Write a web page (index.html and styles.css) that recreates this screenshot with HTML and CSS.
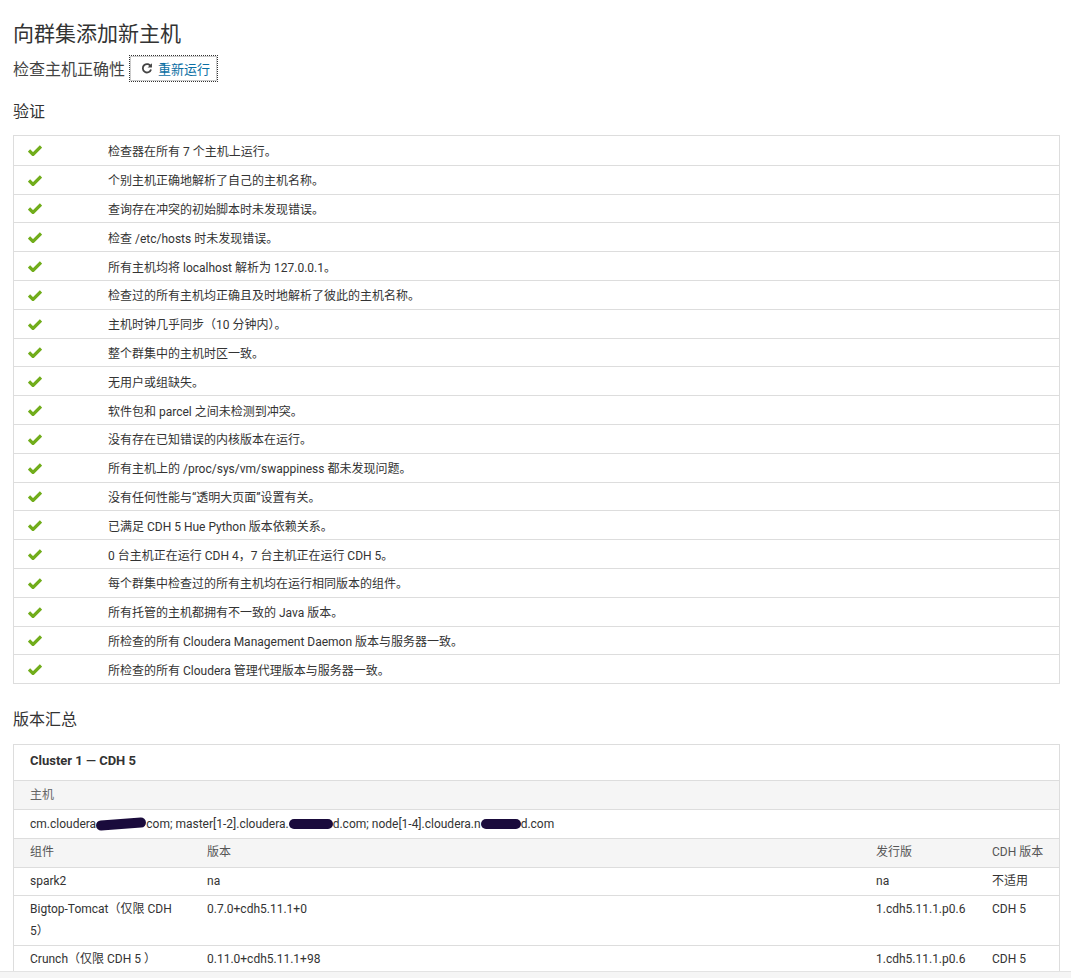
FILE: index.html
```html
<!DOCTYPE html>
<html lang="zh-CN">
<head>
<meta charset="utf-8">
<title>向群集添加新主机</title>
<link rel="stylesheet" href="styles.css">
</head>
<body>
<div class="page">
  <h1 class="title">向群集添加新主机</h1>
  <div class="subhead">
    <span>检查主机正确性</span>
    <button class="rerun" type="button">
      <svg class="refresh" viewBox="0 0 16 16" width="12" height="12"><path d="M13.2 6.2A5.6 5.6 0 1 0 13.4 10" fill="none" stroke="#444" stroke-width="2.4"/><path d="M14.6 1.6V7.4H8.8Z" fill="#444"/></svg>
      <span>重新运行</span>
    </button>
  </div>
  <h2 class="section">验证</h2>
  <div class="checks">
    <div class="check"><span class="ok"></span><span class="msg">检查器在所有 7 个主机上运行。</span></div>
    <div class="check"><span class="ok"></span><span class="msg">个别主机正确地解析了自己的主机名称。</span></div>
    <div class="check"><span class="ok"></span><span class="msg">查询存在冲突的初始脚本时未发现错误。</span></div>
    <div class="check"><span class="ok"></span><span class="msg">检查 /etc/hosts 时未发现错误。</span></div>
    <div class="check"><span class="ok"></span><span class="msg">所有主机均将 localhost 解析为 127.0.0.1。</span></div>
    <div class="check"><span class="ok"></span><span class="msg">检查过的所有主机均正确且及时地解析了彼此的主机名称。</span></div>
    <div class="check"><span class="ok"></span><span class="msg">主机时钟几乎同步（10 分钟内）。</span></div>
    <div class="check"><span class="ok"></span><span class="msg">整个群集中的主机时区一致。</span></div>
    <div class="check"><span class="ok"></span><span class="msg">无用户或组缺失。</span></div>
    <div class="check"><span class="ok"></span><span class="msg">软件包和 parcel 之间未检测到冲突。</span></div>
    <div class="check"><span class="ok"></span><span class="msg">没有存在已知错误的内核版本在运行。</span></div>
    <div class="check"><span class="ok"></span><span class="msg">所有主机上的 /proc/sys/vm/swappiness 都未发现问题。</span></div>
    <div class="check"><span class="ok"></span><span class="msg">没有任何性能与“透明大页面”设置有关。</span></div>
    <div class="check"><span class="ok"></span><span class="msg">已满足 CDH 5 Hue Python 版本依赖关系。</span></div>
    <div class="check"><span class="ok"></span><span class="msg">0 台主机正在运行 CDH 4，7 台主机正在运行 CDH 5。</span></div>
    <div class="check"><span class="ok"></span><span class="msg">每个群集中检查过的所有主机均在运行相同版本的组件。</span></div>
    <div class="check"><span class="ok"></span><span class="msg">所有托管的主机都拥有不一致的 Java 版本。</span></div>
    <div class="check"><span class="ok"></span><span class="msg">所检查的所有 Cloudera Management Daemon 版本与服务器一致。</span></div>
    <div class="check"><span class="ok"></span><span class="msg">所检查的所有 Cloudera 管理代理版本与服务器一致。</span></div>
  </div>
  <h2 class="section section-2">版本汇总</h2>
  <div class="summary">
    <div class="cluster">Cluster 1 — CDH 5</div>
    <div class="label-row">主机</div>
    <div class="hosts">cm.cloudera.<span class="redact r1"></span>com; master[1-2].cloudera.<span class="redact r2"></span>d.com; node[1-4].cloudera.n<span class="redact r3"></span>d.com</div>
    <div class="grid head">
      <div>组件</div><div>版本</div><div>发行版</div><div>CDH 版本</div>
    </div>
    <div class="grid">
      <div>spark2</div><div>na</div><div>na</div><div>不适用</div>
    </div>
    <div class="grid">
      <div>Bigtop-Tomcat（仅限 CDH 5）</div><div>0.7.0+cdh5.11.1+0</div><div>1.cdh5.11.1.p0.6</div><div>CDH 5</div>
    </div>
    <div class="grid">
      <div>Crunch（仅限 CDH 5 ）</div><div>0.11.0+cdh5.11.1+98</div><div>1.cdh5.11.1.p0.6</div><div>CDH 5</div>
    </div>
  </div>
</div>
<div class="bottom-bar"></div>
</body>
</html>
```
FILE: styles.css
```css
html, body {
  margin: 0;
  padding: 0;
  background: #fff;
}
body {
  font-family: Roboto, "Noto Sans CJK SC", sans-serif;
  color: #333;
  font-size: 13px;
}
.page {
  padding: 0 11px 0 13px;
}
.title {
  margin: 0;
  padding-top: 19px;
  font-size: 21px;
  line-height: 30px;
  font-weight: normal;
  color: #333;
}
.subhead {
  display: flex;
  align-items: center;
  gap: 4px;
  margin-top: 6px;
  font-size: 16px;
  color: #444;
  height: 26px;
}
.rerun {
  display: inline-flex;
  align-items: center;
  gap: 5px;
  height: 27px;
  width: 89px;
  padding: 0 0 0 11px;
  background: #fff;
  border: 1px dotted #333;
  box-shadow: inset 0 0 0 1px #ccc;
  font-family: Roboto, "Noto Sans CJK SC", sans-serif;
  font-size: 13px;
  color: #0b6fa4;
  cursor: pointer;
}
.refresh { display: block; }
.section {
  margin: 19px 0 0;
  font-size: 16px;
  font-weight: normal;
  line-height: 24px;
  color: #333;
}
.checks {
  margin-top: 11px;
  border: 1px solid #ddd;
}
.check {
  display: flex;
  align-items: center;
  height: 27.8px;
  border-top: 1px solid #ddd;
}
.check:first-child { border-top: none; height: 28.8px; }
.ok {
  width: 14px;
  height: 12px;
  margin-left: 14px;
  margin-right: 66px;
  background: no-repeat center / contain url("data:image/svg+xml;utf8,<svg xmlns='http://www.w3.org/2000/svg' viewBox='0 0 14 12'><path d='M1 6.5 L5 10.5 L13 2.5' fill='none' stroke='%2371ad1b' stroke-width='3.2'/></svg>");
}
.msg {
  font-size: 12px;
  color: #333;
}
.section-2 {
  margin-top: 24px;
}
.summary {
  margin-top: 12px;
  border: 1px solid #ddd;
  border-bottom: none;
}
.cluster {
  height: 35px;
  line-height: 31px;
  padding-left: 16px;
  font-weight: bold;
  font-size: 13px;
  color: #333;
  border-bottom: 1px solid #ddd;
}
.label-row {
  height: 28px;
  line-height: 28px;
  padding-left: 16px;
  background: #f5f5f5;
  color: #666;
  font-size: 12px;
  border-bottom: 1px solid #ddd;
}
.hosts {
  height: 28px;
  line-height: 28px;
  padding-left: 16px;
  font-size: 12px;
  color: #333;
  border-bottom: 1px solid #ddd;
  white-space: nowrap;
}
.redact {
  display: inline-block;
  height: 10px;
  background: #1a0b3c;
  border-radius: 6px;
  vertical-align: -1px;
}
.r1 { width: 50px; transform: rotate(-4deg); margin-left: -3px; }
.r2 { width: 44px; }
.r3 { width: 40px; }
.grid {
  display: grid;
  grid-template-columns: 177px 669px 116px 1fr;
  border-bottom: 1px solid #ddd;
  font-size: 12px;
  color: #333;
}
.grid > div {
  padding: 2px 16px 3px 16px;
  line-height: 22px;
}
.grid > div:first-child { padding-right: 4px; }
.grid > div:last-child { padding-right: 0; white-space: nowrap; }
.head {
  background: #f5f5f5;
  color: #555;
}
.head > div { padding-top: 2px; padding-bottom: 4px; }
.bottom-bar {
  position: fixed;
  left: 0;
  right: 0;
  bottom: 0;
  height: 6px;
  background: #f5f5f5;
  border-top: 1px solid #e3e3e3;
}
```
